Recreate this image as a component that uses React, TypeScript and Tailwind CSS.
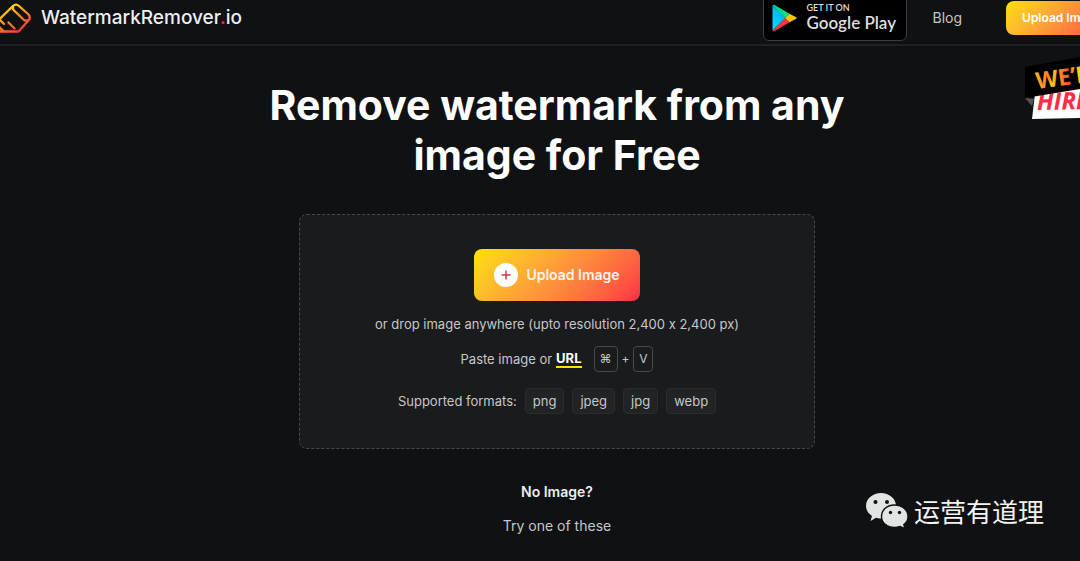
import React from "react";

const formats = ["png", "jpeg", "jpg", "webp"];

function LogoIcon() {
  return (
    <svg className="h-8 w-8 shrink-0" viewBox="0 0 32 32" fill="none" stroke="url(#logo)" strokeWidth="2.3" strokeLinejoin="round" strokeLinecap="round" aria-hidden="true">
      <defs>
        <linearGradient id="logo" gradientUnits="userSpaceOnUse" x1="8" y1="4" x2="22" y2="30">
          <stop stopColor="#ffe000" />
          <stop offset="1" stopColor="#ff2a44" />
        </linearGradient>
      </defs>
      <path d="M-1 17.500 L13 4 Q16 1.200 19 4 L28.500 12.500 Q31 15.500 28.500 18.500 L18.500 29.500 H-1" />
      <path d="M13 4.500 V7.500 L24.500 18.500 H28" />
      <path d="M8.500 20.500 L14.500 26.500 M-1 17 L4 22 M-1 25 L3.500 29" />
    </svg>
  );
}

function PlayIcon() {
  return (
    <svg className="h-7 w-[26px] shrink-0" viewBox="0 0 26 28" aria-hidden="true">
      <defs>
        <linearGradient id="playBlue" x1="1" y1="0" x2="0" y2="1">
          <stop stopColor="#00a5f5" />
          <stop offset="1" stopColor="#00dcff" />
        </linearGradient>
      </defs>
      <path fill="url(#playBlue)" d="M0.500 1.500 V26.500 L13.500 14 Z" />
      <path fill="#00e08a" d="M0.500 1.200 Q1.200 0.200 2.500 1 L17.500 9.700 L13.200 14 Z" />
      <path fill="#ff3347" d="M0.500 26.800 Q1.200 27.800 2.500 27 L17.500 18.300 L13.200 14 Z" />
      <path fill="#ffc400" d="M17.500 9.700 L24.200 13.200 Q25.300 14 24.200 14.800 L17.500 18.300 L13.200 14 Z" />
    </svg>
  );
}

function HiringBadge() {
  return (
    <a href="#careers" className="absolute top-14 right-0 block w-14" aria-label="We're hiring">
      <svg className="h-16 w-14" viewBox="0 0 56 64">
        <defs>
          <linearGradient id="hire" gradientUnits="userSpaceOnUse" x1="10" y1="0" x2="56" y2="6">
            <stop stopColor="#ffd000" />
            <stop offset="0.420" stopColor="#ff7a30" />
            <stop offset="0.460" stopColor="#ffd000" />
            <stop offset="0.850" stopColor="#ff4a3d" />
            <stop offset="1" stopColor="#ffd000" />
          </linearGradient>
        </defs>
        <path fill="#555" d="M1 42 L10 43 L8 50 Z" />
        <path fill="#fff" d="M11 38 L56 30 V62 L8 63 Z" />
        <text x="13" y="54" fill="#ff2a44" fontFamily="Open Sans, sans-serif" fontWeight="700" fontStyle="italic" fontSize="24" transform="rotate(-1 13 54)">HIRING</text>
        <path fill="#000" d="M1 11 L56 1 V33 L1 42 Z" />
        <text x="13" y="33" fill="url(#hire)" fontFamily="Open Sans, sans-serif" fontWeight="700" fontSize="23" transform="rotate(-8 13 33)">WE’RE</text>
      </svg>
    </a>
  );
}

function WeChatIcon() {
  return (
    <svg className="h-9 w-[42px] shrink-0" viewBox="0 0 42 36" aria-hidden="true">
      <path fill="#e2e3e3" d="M15 0 C23 0 30 5.500 30 13 C30 20.500 23 25.500 15 25.500 C13 25.500 11.500 25.300 10 24.800 L4.500 28 L6 23 C2.300 20.500 0 17 0 13 C0 5.500 7 0 15 0 Z" />
      <path fill="#e2e3e3" stroke="#101113" strokeWidth="1.400" d="M28.500 12 C36 12 42 17 42 23.500 C42 27 40.500 29.500 37.800 31.500 L39 35.700 L34 33.500 C32.500 34 30.500 34.500 28.500 34.500 C21 34.500 15.500 29.800 15.500 23.500 C15.500 17 21 12 28.500 12 Z" />
      <g fill="#101113">
        <circle cx="9.500" cy="9" r="2" />
        <circle cx="21" cy="9" r="2" />
        <circle cx="24.500" cy="19.500" r="1.700" />
        <circle cx="33.500" cy="19.500" r="1.700" />
      </g>
    </svg>
  );
}

export default function App() {
  return (
    <div className="relative min-h-screen overflow-hidden bg-[#101113] font-['Inter',sans-serif] text-[#c6c7c8] [font-variant-ligatures:no-contextual]">
      <header className="flex h-[46px] items-center justify-between border-b-2 border-[#202123] pb-2">
        <a href="#home" className="flex items-center gap-[9px] text-[19px] font-medium text-[#eeeeef]">
          <LogoIcon />
          <span>WatermarkRemover<span className="text-[#ff2a44]">.</span>io</span>
        </a>
        <nav className="-mr-[38px] flex shrink-0 items-center">
          <a href="#play" className="flex h-[46px] w-36 items-center gap-2 rounded-md border border-[#3c3d3f] bg-black pl-2 font-['Lato',sans-serif] text-[#dededf]">
            <PlayIcon />
            <span className="flex flex-col">
              <span className="text-[9px] leading-[10px] font-semibold">GET IT ON</span>
              <span className="text-[17px] leading-5 font-semibold">Google Play</span>
            </span>
          </a>
          <a href="#blog" className="mr-11 ml-[25px] text-sm">Blog</a>
          <button className="h-[34px] w-28 rounded-lg bg-linear-135 from-[#ffe000] to-[#ff2a44] text-xs font-semibold text-white">Upload Image</button>
        </nav>
      </header>

      <HiringBadge />

      <main className="flex flex-col items-center pt-[34px] pl-[34px] text-center">
        <h1 className="max-w-[640px] text-[41px] leading-[50px] font-bold text-white">Remove watermark from any image for Free</h1>

        <section className="mt-[34px] flex w-full max-w-[516px] flex-col items-center rounded-lg border border-dashed border-[#47484a] bg-[#1a1b1d] pt-[34px] pb-[34px] text-[13px] leading-5">
          <button className="flex h-[52px] items-center gap-2 rounded-lg bg-linear-135 from-[#ffe000] to-[#ff2a44] px-5 text-sm font-semibold text-[#fff4ea]">
            <span className="flex size-6 items-center justify-center rounded-full bg-white">
              <svg className="size-2.5" viewBox="0 0 10 10" stroke="#f02a50" strokeWidth="1.500" aria-hidden="true"><path d="M5 0.500 V9.500 M0.500 5 H9.500" /></svg>
            </span>
            Upload Image
          </button>
          <p className="mt-[13px]">or drop image anywhere (upto resolution 2,400 x 2,400 px)</p>
          <div className="mt-3 flex items-center">
            <span>Paste image or</span>
            <a href="#url" className="mr-3 ml-1 border-b-2 border-[#ffe000] leading-4 font-bold text-white">URL</a>
            <kbd className="flex h-[26px] w-6 items-center justify-center rounded-sm border border-[#47484a] font-['Inter','DejaVu_Sans',sans-serif] text-xs">⌘</kbd>
            <span className="mx-1 text-xs">+</span>
            <kbd className="flex h-[26px] w-5 items-center justify-center rounded-sm border border-[#47484a] font-['Inter',sans-serif] text-xs">V</kbd>
          </div>
          <div className="mt-4 flex items-center gap-2">
            <span>Supported formats:</span>
            {formats.map((f) => (
              <span key={f} className="flex h-[26px] items-center rounded-sm border border-[#2a2b2d] bg-[#222325] px-[7px]">{f}</span>
            ))}
          </div>
        </section>

        <p className="mt-[33px] text-sm leading-5 font-semibold text-[#ededee]">No Image?</p>
        <p className="mt-3.5 text-sm leading-5">Try one of these</p>
      </main>

      <div className="absolute right-9 bottom-8 flex items-center gap-1.5 font-['Noto_Sans_CJK_SC',sans-serif] text-[26px] leading-9 text-[#f4f4f4]">
        <WeChatIcon />
        <span>运营有道理</span>
      </div>
    </div>
  );
}
